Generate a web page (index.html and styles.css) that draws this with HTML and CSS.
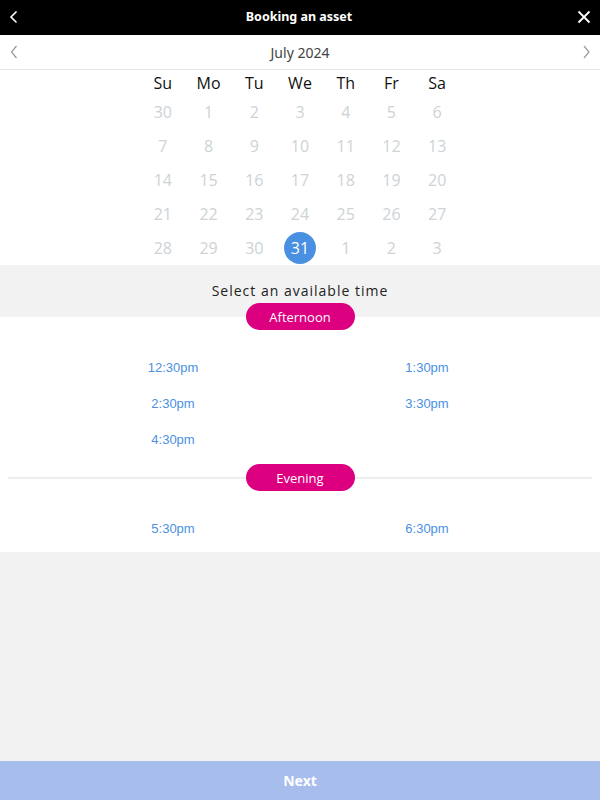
FILE: index.html
```html
<!DOCTYPE html>
<html lang="en">
<head>
  <meta charset="UTF-8">
  <meta name="viewport" content="width=device-width, initial-scale=1.0">
  <title>Booking an asset</title>
  <link rel="stylesheet" href="styles.css">
</head>
<body>

  <div class="app">
    <!-- Barra superior -->
    <header class="topbar">
      <button class="icon-btn" aria-label="Back">
        <svg width="10" height="14" viewBox="0 0 10 14"><path d="M7.5 1.5 L2 7 L7.5 12.5" fill="none" stroke="#fff" stroke-width="1.6"/></svg>
      </button>
      <div class="topbar-title">Booking an asset</div>
      <button class="icon-btn" aria-label="Close">
        <svg width="14" height="14" viewBox="0 0 14 14"><path d="M1.5 1.5 L12.5 12.5 M12.5 1.5 L1.5 12.5" fill="none" stroke="#fff" stroke-width="1.8"/></svg>
      </button>
    </header>

    <!-- Mês -->
    <div class="month-bar">
      <button class="icon-btn" aria-label="Previous month">
        <svg width="10" height="14" viewBox="0 0 10 14"><path d="M7.5 1 L2.5 7 L7.5 13" fill="none" stroke="#999" stroke-width="1.2"/></svg>
      </button>
      <div class="month-title">July 2024</div>
      <button class="icon-btn" aria-label="Next month">
        <svg width="10" height="14" viewBox="0 0 10 14"><path d="M3 1 L8 7 L3 13" fill="none" stroke="#999" stroke-width="1.2"/></svg>
      </button>
    </div>

    <div class="calendar">
      <div class="weekdays">
        <span>Su</span><span>Mo</span><span>Tu</span><span>We</span><span>Th</span><span>Fr</span><span>Sa</span>
      </div>
      <div class="days" id="days"></div>
    </div>

    <div class="select-label">Select an available time</div>

    <div class="slots-panel">
      <div class="period period-first"><span class="pill">Afternoon</span></div>
      <div class="slots">
        <a class="slot">12:30pm</a>
        <a class="slot">1:30pm</a>
        <a class="slot">2:30pm</a>
        <a class="slot">3:30pm</a>
        <a class="slot">4:30pm</a>
      </div>

      <div class="period period-line"><span class="pill">Evening</span></div>
      <div class="slots slots-last">
        <a class="slot">5:30pm</a>
        <a class="slot">6:30pm</a>
      </div>
    </div>

    <div class="spacer"></div>

    <button class="next-btn">Next</button>
  </div>

  <script>
    // Monta os dias do calendário (julho 2024)
    const days = [30,1,2,3,4,5,6,7,8,9,10,11,12,13,14,15,16,17,18,19,20,21,22,23,24,25,26,27,28,29,30,31,1,2,3];
    const grid = document.getElementById('days');
    days.forEach((d, i) => {
      const cell = document.createElement('span');
      cell.className = 'day';
      const num = document.createElement('span');
      num.textContent = d;
      if (i === 31) num.className = 'selected';
      cell.appendChild(num);
      grid.appendChild(cell);
    });
  </script>

</body>
</html>
```

FILE: styles.css
```css
* {
  margin: 0;
  padding: 0;
  box-sizing: border-box;
}
html, body {
  width: 100%;
  height: 100%;
  background-color: #f2f2f2;
  font-family: 'Open Sans', sans-serif;
}
.app {
  display: flex;
  flex-direction: column;
  height: 100%;
}
.icon-btn {
  background: none;
  border: none;
  width: 28px;
  height: 28px;
  display: flex;
  align-items: center;
  justify-content: center;
  cursor: pointer;
}

/* Barra superior */
.topbar {
  height: 35px;
  background-color: #000;
  color: #fff;
  display: flex;
  align-items: center;
  justify-content: space-between;
  padding: 0 2px 2px 0;
}
.topbar-title {
  font-family: 'Noto Sans', sans-serif;
  font-weight: bold;
  font-size: 12.5px;
}

.month-bar {
  height: 35px;
  background-color: #fff;
  border-bottom: 1px solid #e6e6e6;
  display: flex;
  align-items: center;
  justify-content: space-between;
}
.month-title {
  font-family: 'Noto Sans', sans-serif;
  font-size: 14px;
  color: #444;
}

/* Calendário */
.calendar {
  background-color: #fff;
  display: flex;
  flex-direction: column;
  align-items: center;
}
.weekdays, .days {
  width: 320px;
  display: grid;
  grid-template-columns: repeat(7, 1fr);
  text-align: center;
}
.weekdays {
  height: 25px;
  align-items: center;
  font-size: 16px;
  color: #111;
}
.days {
  grid-auto-rows: 34px;
  font-size: 16px;
  color: #cdd3d6;
}
.day {
  display: flex;
  align-items: center;
  justify-content: center;
}
.selected {
  width: 32px;
  height: 32px;
  border-radius: 50%;
  background-color: #4a90e2;
  color: #fff;
  display: flex;
  align-items: center;
  justify-content: center;
}

.select-label {
  height: 52px;
  padding-top: 16px;
  text-align: center;
  font-size: 14px;
  letter-spacing: 1px;
  color: #222;
  background-color: #f2f2f2;
}

/* Horários */
.slots-panel {
  background-color: #fff;
  padding-bottom: 6px;
}
.period {
  display: flex;
  align-items: center;
  justify-content: center;
}
.period-first {
  margin-top: -14px;
}
.period-line {
  margin: 7px 8px 0;
}
.period-line::before,
.period-line::after {
  content: "";
  flex: 1;
  height: 2px;
  background-color: #eeeeee;
}
.pill {
  width: 109px;
  height: 27px;
  border-radius: 14px;
  background-color: #dc0080;
  color: #fff;
  font-size: 13px;
  display: flex;
  align-items: center;
  justify-content: center;
}
.slots {
  display: grid;
  grid-template-columns: 1fr 1fr;
  grid-auto-rows: 36px;
  padding: 19px 46px 0;
}
.slots-last {
  padding-top: 19px;
}
.slot {
  font-family: 'Liberation Sans', Arial, sans-serif;
  font-size: 13px;
  color: #4a90e2;
  display: flex;
  align-items: center;
  justify-content: center;
  cursor: pointer;
}

.spacer {
  flex: 1;
}
.next-btn {
  height: 39px;
  border: none;
  background-color: #a7bdec;
  color: #fff;
  font-family: 'Noto Sans', sans-serif;
  font-weight: bold;
  font-size: 14px;
  cursor: pointer;
}
```
